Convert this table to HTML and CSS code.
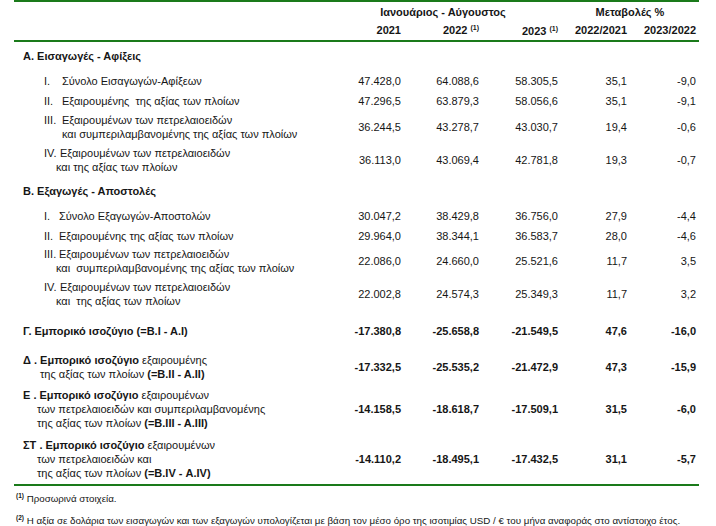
FILE: index.html
```html
<!DOCTYPE html>
<html lang="el">
<head>
<meta charset="utf-8">
<link rel="stylesheet" href="styles.css">
</head>
<body>
<div class="sheet">
  <div class="thead">
    <div class="row hrow1">
      <div class="lab"></div>
      <div class="span3 bold">Ιανουάριος - Αύγουστος</div>
      <div class="span2 bold">Μεταβολές %</div>
    </div>
    <div class="row hrow2">
      <div class="lab"></div>
      <div class="num bold">2021</div>
      <div class="num bold">2022 <sup>(1)</sup></div>
      <div class="num bold low">2023 <sup>(1)</sup></div>
      <div class="num bold">2022/2021</div>
      <div class="num bold">2023/2022</div>
    </div>
  </div>
  <div class="tbody">
    <div class="row h28"><div class="lab sec bold">Α. Εισαγωγές - Αφίξεις</div></div>
    <div class="row h22">
      <div class="lab item"><span class="rn">I.</span><span>Σύνολο Εισαγωγών-Αφίξεων</span></div>
      <div class="num">47.428,0</div><div class="num">64.088,6</div><div class="num">58.305,5</div><div class="num">35,1</div><div class="num">-9,0</div>
    </div>
    <div class="row h18">
      <div class="lab item"><span class="rn">II.</span><span>Εξαιρουμένης&nbsp; της αξίας των πλοίων</span></div>
      <div class="num">47.296,5</div><div class="num">63.879,3</div><div class="num">58.056,6</div><div class="num">35,1</div><div class="num">-9,1</div>
    </div>
    <div class="row h34">
      <div class="lab item"><span class="rn">III.</span><span>Εξαιρουμένων των πετρελαιοειδών<br>και συμπεριλαμβανομένης της αξίας των πλοίων</span></div>
      <div class="num">36.244,5</div><div class="num">43.278,7</div><div class="num">43.030,7</div><div class="num">19,4</div><div class="num">-0,6</div>
    </div>
    <div class="row h32">
      <div class="lab item"><span class="rn rn16">IV.</span><span>Εξαιρουμένων των πετρελαιοειδών<br><span class="back">και της αξίας των πλοίων</span></span></div>
      <div class="num">36.113,0</div><div class="num">43.069,4</div><div class="num">42.781,8</div><div class="num">19,3</div><div class="num">-0,7</div>
    </div>
    <div class="row h30"><div class="lab sec bold">Β. Εξαγωγές - Αποστολές</div></div>
    <div class="row h20">
      <div class="lab item"><span class="rn rn15">I.</span><span>Σύνολο Εξαγωγών-Αποστολών</span></div>
      <div class="num">30.047,2</div><div class="num">38.429,8</div><div class="num">36.756,0</div><div class="num">27,9</div><div class="num">-4,4</div>
    </div>
    <div class="row h20">
      <div class="lab item"><span class="rn rn15">II.</span><span>Εξαιρουμένης της αξίας των πλοίων</span></div>
      <div class="num">29.964,0</div><div class="num">38.344,1</div><div class="num">36.583,7</div><div class="num">28,0</div><div class="num">-4,6</div>
    </div>
    <div class="row h30">
      <div class="lab item"><span class="rn rn15">III.</span><span>Εξαιρουμένων των πετρελαιοειδών<br><span class="back3">και&nbsp; συμπεριλαμβανομένης της αξίας των πλοίων</span></span></div>
      <div class="num">22.086,0</div><div class="num">24.660,0</div><div class="num">25.521,6</div><div class="num">11,7</div><div class="num">3,5</div>
    </div>
    <div class="row h36">
      <div class="lab item"><span class="rn rn16">IV.</span><span>Εξαιρουμένων των πετρελαιοειδών<br><span class="back">και&nbsp; της αξίας των πλοίων</span></span></div>
      <div class="num">22.002,8</div><div class="num">24.574,3</div><div class="num">25.349,3</div><div class="num">11,7</div><div class="num">3,2</div>
    </div>
    <div class="row h38 bold">
      <div class="lab sec">Γ. Εμπορικό ισοζύγιο (=Β.Ι - Α.Ι)</div>
      <div class="num">-17.380,8</div><div class="num">-25.658,8</div><div class="num">-21.549,5</div><div class="num">47,6</div><div class="num">-16,0</div>
    </div>
    <div class="row h34">
      <div class="lab sec"><b>Δ . Εμπορικό ισοζύγιο</b> εξαιρουμένης<br><span class="ind17">της αξίας των πλοίων <b>(=Β.ΙΙ - Α.ΙΙ)</b></span></div>
      <div class="num bold">-17.332,5</div><div class="num bold">-25.535,2</div><div class="num bold">-21.472,9</div><div class="num bold">47,3</div><div class="num bold">-15,9</div>
    </div>
    <div class="row h50">
      <div class="lab sec"><b>Ε . Εμπορικό ισοζύγιο</b> εξαιρουμένων<br><span class="ind14">των πετρελαιοειδών και συμπεριλαμβανομένης</span><br><span class="ind14">της αξίας των πλοίων <b>(=Β.ΙΙΙ - Α.ΙΙΙ)</b></span></div>
      <div class="num bold">-14.158,5</div><div class="num bold">-18.618,7</div><div class="num bold">-17.509,1</div><div class="num bold">31,5</div><div class="num bold">-6,0</div>
    </div>
    <div class="row h50">
      <div class="lab sec"><b>ΣΤ . Εμπορικό ισοζύγιο</b> εξαιρουμένων<br><span class="ind14">των πετρελαιοειδών και</span><br><span class="ind14">της αξίας των πλοίων <b>(=Β.ΙV - Α.ΙV)</b></span></div>
      <div class="num bold">-14.110,2</div><div class="num bold">-18.495,1</div><div class="num bold">-17.432,5</div><div class="num bold">31,1</div><div class="num bold">-5,7</div>
    </div>
  </div>
  <div class="notes">
    <p class="fn fn1"><sup>(1)</sup> Προσωρινά στοιχεία.</p>
    <p class="fn"><sup>(2)</sup> Η αξία σε δολάρια των εισαγωγών και των εξαγωγών υπολογίζεται με βάση τον μέσο όρο της ισοτιμίας USD / € του μήνα αναφοράς στο αντίστοιχο έτος.</p>
  </div>
</div>
</body>
</html>
```
FILE: styles.css
```css
html, body {
  margin: 0;
  padding: 0;
  background: #ffffff;
}
body {
  font-family: "Liberation Sans", Arial, sans-serif;
  font-size: 11px;
  color: #161616;
}
.sheet {
  margin-left: 14px;
  width: 685px;
}
.thead {
  border-top: 2px solid #1a7a1a;
  border-bottom: 2px solid #1a7a1a;
}
.tbody {
  border-bottom: 2px solid #1a7a1a;
}
.row {
  display: grid;
  grid-template-columns: 330px 57px 78px 79px 69px 69px;
  align-items: center;
  line-height: 14px;
}
.bold, b { font-weight: bold; }
.hrow1 { height: 20px; }
.hrow2 { align-items: start; padding-top: 1px; height: 17px; }
.span3 {
  grid-column: span 3;
  text-align: center;
  padding-right: 16px;
}
.span2 {
  grid-column: span 2;
  text-align: center;
  padding-left: 6px;
}
.num { text-align: right; }
.low { position: relative; top: 1px; }
sup {
  font-size: 7px;
  vertical-align: 4px;
  line-height: 0;
}
.h18 { height: 18px; }
.h20 { height: 20px; }
.h22 { height: 22px; }
.h28 { height: 28px; }
.h30 { height: 30px; }
.h32 { height: 32px; }
.h34 { height: 34px; }
.h36 { height: 36px; }
.h38 { height: 38px; }
.h50 { height: 50px; }
.sec { padding-left: 9px; }
.item {
  display: flex;
  padding-left: 30px;
}
.rn { width: 18px; flex: none; }
.rn15 { width: 15px; }
.rn16 { width: 16px; }
.back { margin-left: -4px; }
.back3 { margin-left: -3px; }
.ind17 { padding-left: 17px; }
.ind14 { padding-left: 14px; }
.notes {
  padding-top: 6px;
}
.fn {
  margin: 0;
  padding-left: 2px;
  font-size: 9.75px;
  line-height: 14px;
}
.fn sup { font-weight: bold; font-size: 6.5px; }
.fn1 { margin-bottom: 8px; }
```
